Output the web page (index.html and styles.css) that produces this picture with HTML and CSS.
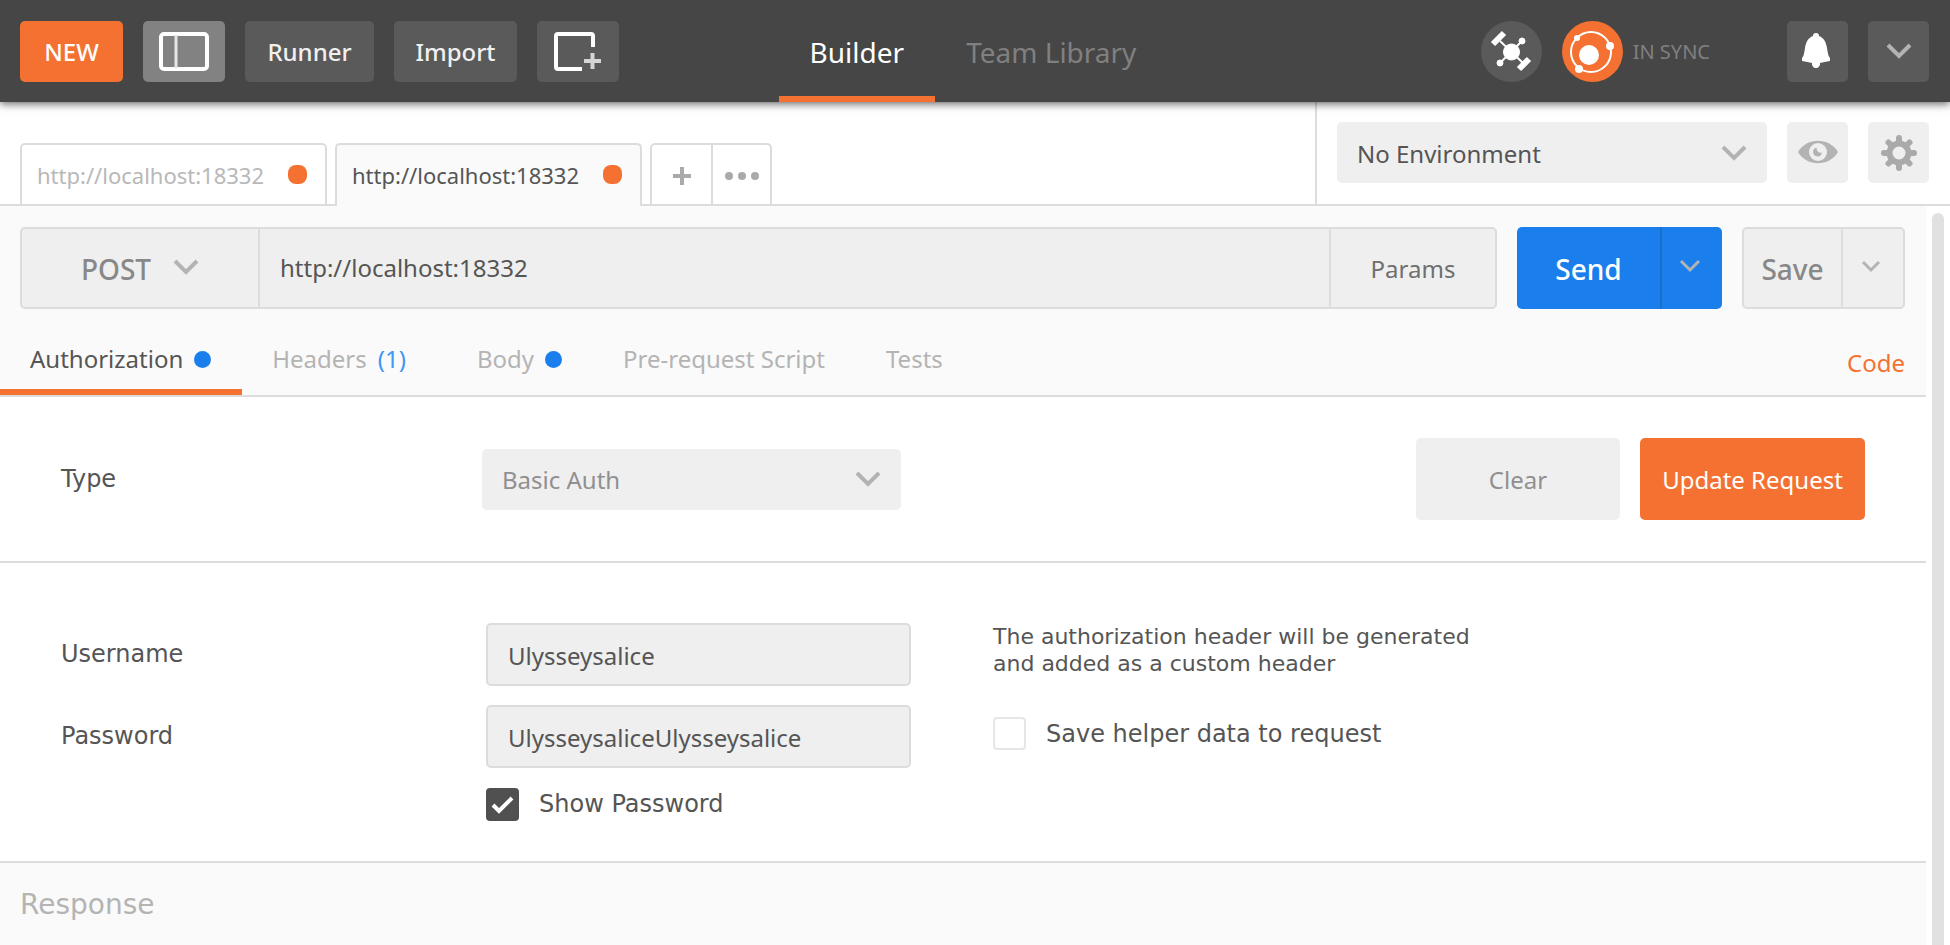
FILE: index.html
```
<!DOCTYPE html>
<html lang="en">
<head>
<meta charset="utf-8">
<title>Request Builder</title>
<link rel="stylesheet" href="styles.css">
</head>
<body>
<header class="topbar">
  <div class="topbar-left">
    <button class="btn-dark btn-new">NEW</button>
    <button class="btn-dark btn-icon is-on" aria-label="Toggle sidebar">
      <svg width="50" height="40" viewBox="0 0 50 40" fill="none" stroke="#fff"><rect x="2" y="3" width="46" height="35" rx="3" stroke-width="4"/><path d="M17 4v33" stroke-width="3" stroke="#e6e6e6"/></svg>
    </button>
    <button class="btn-dark btn-runner">Runner</button>
    <button class="btn-dark btn-import">Import</button>
    <button class="btn-dark btn-icon" aria-label="New window">
      <svg width="50" height="40" viewBox="0 0 50 40" fill="none" stroke="#fff" stroke-width="4"><path d="M40 16V5a2 2 0 0 0-2-2H5a2 2 0 0 0-2 2v31a2 2 0 0 0 2 2h24"/><path d="M31 30h17M39.500 22v16" stroke="#d5d5d5"/></svg>
    </button>
  </div>
  <nav class="topnav">
    <a href="#" class="topnav-item active">Builder</a>
    <a href="#" class="topnav-item">Team Library</a>
  </nav>
  <div class="topbar-right">
    <button class="round" aria-label="Interceptor">
      <svg width="61" height="61" viewBox="0 0 61 61"><g fill="#fff" stroke="#fff"><path d="M19 20L42 42M19 42L41 20" stroke-width="2"/><circle cx="30.500" cy="31" r="8"/><circle cx="41" cy="20" r="3"/><circle cx="19" cy="42" r="3"/><path d="M12 23L23 12M38 48L48 38" stroke-width="6"/></g></svg>
    </button>
    <button class="round round-sync" aria-label="Sync">
      <svg width="61" height="61" viewBox="0 0 61 61"><circle cx="29" cy="31" r="20" fill="none" stroke="#fff" stroke-width="2"/><g fill="#fff"><circle cx="27" cy="34" r="10"/><circle cx="15" cy="17" r="3"/><circle cx="48" cy="25" r="4"/><circle cx="17" cy="48" r="4"/></g></svg>
    </button>
    <span class="sync-text">IN SYNC</span>
    <button class="btn-dark btn-square" aria-label="Notifications">
      <svg width="34" height="36" viewBox="0 0 34 36" fill="#fff"><path d="M15 0c2 0 3 1 3 3 5 2 7 6 8 12 1 5 1 8 3 10v3c-4 1-7 1-10 2v2c-1 1-1 3-4 3s-3-2-4-3v-2c-3-1-6-1-10-2v-3c2-2 2-5 3-10 1-6 3-10 8-12 0-2 1-3 3-3z"/></svg>
    </button>
    <button class="btn-dark btn-square" aria-label="Account menu">
      <svg class="chev" width="26" height="16" viewBox="0 0 26 16"><path d="M2 2l11 11L24 2"/></svg>
    </button>
  </div>
</header>

<section class="tabstrip">
  <div class="tabs">
    <button class="tab"><span class="tab-name">http://localhost:18332</span><i class="dot dot-tab"></i></button>
    <button class="tab active"><span class="tab-name">http://localhost:18332</span><i class="dot dot-tab"></i></button>
    <div class="tab-tools">
      <button class="tab-tool" aria-label="New tab"><svg width="18" height="18" viewBox="0 0 18 18" stroke="#aaa" stroke-width="4"><path d="M0 9h18M9 0v18"/></svg></button>
      <button class="tab-tool" aria-label="More tabs"><svg width="36" height="10" viewBox="0 0 36 10" fill="#aaa"><circle cx="5" cy="5" r="4"/><circle cx="18" cy="5" r="4"/><circle cx="31" cy="5" r="4"/></svg></button>
    </div>
  </div>
  <div class="environment">
    <div class="select env-select">
      <select aria-label="Environment"><option>No Environment</option></select>
      <svg class="chev" width="26" height="16" viewBox="0 0 26 16"><path d="M2 2l11 11L24 2"/></svg>
    </div>
    <button class="btn-light btn-square" aria-label="Quick look">
      <svg width="40" height="26" viewBox="0 0 40 26"><path d="M0 12C9-3 31-3 40 12 31 27 9 27 0 12z" fill="#b3b3b3"/><circle cx="20" cy="12" r="9" fill="#efefef"/><path d="M18.500 7.500a4.500 4.500 0 1 0 5.500 5c-3 1-5.500-1-5.500-5z" fill="#b3b3b3"/></svg>
    </button>
    <button class="btn-light btn-square" aria-label="Settings">
      <svg width="36" height="36" viewBox="-18 -18 36 36"><g stroke="#aaa" fill="none"><circle r="9.500" stroke-width="6"/><path d="M0-15v4M0 15v-4M-15 0h4M15 0h-4M-10.500-10.500l3 3M10.500 10.500l-3-3M-10.500 10.500l3-3M10.500-10.500l-3 3" stroke-width="6" stroke-linecap="round"/></g></svg>
    </button>
  </div>
</section>

<div class="workspace">
  <main class="content">
    <section class="request">
      <div class="urlrow">
        <div class="urlbox">
          <button class="method">POST <svg class="chev" width="26" height="16" viewBox="0 0 26 16"><path d="M2 2l11 11L24 2"/></svg></button>
          <input class="url" type="text" aria-label="Request URL" value="http://localhost:18332">
          <button class="params">Params</button>
        </div>
        <div class="split split-send">
          <button class="split-main">Send</button>
          <button class="split-more" aria-label="Send options"><svg class="chev" width="22" height="14" viewBox="0 0 22 14"><path d="M2 2l9 9 9-9"/></svg></button>
        </div>
        <div class="split split-save">
          <button class="split-main">Save</button>
          <button class="split-more" aria-label="Save options"><svg class="chev" width="20" height="13" viewBox="0 0 20 13"><path d="M2 2l8 8 8-8"/></svg></button>
        </div>
      </div>
      <nav class="subtabs">
        <a href="#" class="subtab active">Authorization <i class="dot"></i></a>
        <a href="#" class="subtab">Headers <span class="count">(1)</span></a>
        <a href="#" class="subtab">Body <i class="dot"></i></a>
        <a href="#" class="subtab">Pre-request Script</a>
        <a href="#" class="subtab">Tests</a>
        <a href="#" class="code">Code</a>
      </nav>
    </section>

    <section class="auth-type">
      <label class="label" for="type">Type</label>
      <div class="select type-select">
        <select id="type"><option>Basic Auth</option></select>
        <svg class="chev" width="26" height="16" viewBox="0 0 26 16"><path d="M2 2l11 11L24 2"/></svg>
      </div>
      <div class="actions">
        <button class="btn-light btn-clear">Clear</button>
        <button class="btn-update">Update Request</button>
      </div>
    </section>

    <section class="credentials">
      <div class="fields">
        <label class="label" for="user">Username</label>
        <input class="field" id="user" type="text" value="Ulysseysalice">
        <label class="label" for="pass">Password</label>
        <input class="field" id="pass" type="text" value="UlysseysaliceUlysseysalice">
        <label class="check show-pass"><input type="checkbox" checked>Show Password</label>
      </div>
      <div class="helper">
        <p class="note">The authorization header will be generated<br>and added as a custom header</p>
        <label class="check"><input type="checkbox">Save helper data to request</label>
      </div>
    </section>

    <section class="response"><h2>Response</h2></section>
  </main>
  <div class="scroll"></div>
</div>
</body>
</html>
```
FILE: styles.css
```
* { box-sizing: border-box; }
html, body { height: 100%; }
body {
  margin: 0;
  display: flex;
  flex-direction: column;
  background: #fff;
  color: #555;
  font-family: "Noto Sans", "Open Sans", sans-serif;
  font-size: 24px;
  line-height: 32px;
}
button, input, select { font: inherit; color: inherit; margin: 0; }
button { border: 0; padding: 0; background: none; display: flex; align-items: center; justify-content: center; white-space: nowrap; }
a { color: inherit; text-decoration: none; }
svg { display: block; flex: none; overflow: visible; }
.chev { fill: none; stroke: #b3b3b3; stroke-width: 4; }

.topbar {
  position: relative;
  flex: none;
  display: grid;
  grid-template-columns: 1fr auto 1fr;
  height: 102px;
  padding: 0 21px 0 20px;
  background: #464646;
  box-shadow: 0 2px 8px rgba(0, 0, 0, .6);
}
.topbar-left, .topbar-right { display: flex; align-items: center; gap: 20px; }
.topbar-right { justify-content: flex-end; }
.btn-dark { height: 61px; padding-top: 2px; border-radius: 5px; background: #5a5a5a; color: #f0f0f0; font-weight: 500; }
.btn-new { width: 103px; background: #f47132; color: #fff; }
.btn-icon { width: 82px; padding: 0; }
.is-on { background: #828282; }
.btn-runner { width: 129px; }
.btn-import { width: 123px; }
.btn-square { width: 61px; height: 61px; padding: 0; border-radius: 5px; }
.topnav { display: flex; margin-right: 3px; }
.topnav-item { display: flex; align-items: center; padding: 8px 31px 0; border-bottom: 6px solid transparent; font-size: 28px; color: #808080; }
.topnav-item.active { color: #fff; border-color: #f47132; }
.round { width: 61px; height: 61px; border-radius: 50%; background: #5a5a5a; }
.round-sync { background: #f47132; }
.sync-text { margin: 2px 57px 0 -10px; font-size: 20px; color: #808080; }

.tabstrip { flex: none; display: flex; height: 104px; border-bottom: 2px solid #dcdcdc; }
.tabs { flex: 1; display: flex; align-items: flex-end; padding-left: 20px; }
.tab {
  width: 307px;
  height: 61px;
  margin-right: 8px;
  padding: 0 18px 0 15px;
  justify-content: space-between;
  border: 2px solid #dcdcdc;
  border-bottom: 0;
  border-radius: 5px 5px 0 0;
  color: #b8b8b8;
  font-size: 22px;
}
.tab.active { height: 63px; margin-bottom: -2px; padding-bottom: 2px; background: #fafafa; color: #555; }
.tab-name { width: 230px; overflow: hidden; text-align: left; }
.tab-tools { display: flex; border: 2px solid #dcdcdc; border-bottom: 0; border-radius: 5px 5px 0 0; height: 61px; }
.tab-tool { width: 59px; padding-top: 2px; }
.tab-tool + .tab-tool { border-left: 2px solid #dcdcdc; }
.dot { flex: none; width: 17px; height: 17px; border-radius: 50%; background: #1a7fec; }
.dot-tab { width: 19px; height: 19px; border-radius: 8px; background: #f47132; }
.environment { display: flex; gap: 20px; padding: 20px 21px 0 20px; border-left: 2px solid #dcdcdc; }
.select { display: grid; align-items: center; }
.select > * { grid-area: 1 / 1; }
.select .chev { justify-self: end; margin-right: 20px; pointer-events: none; }
.select select { appearance: none; width: 100%; height: 61px; padding: 2px 20px 0; border: 0; border-radius: 5px; background: #efefef; }
.env-select { width: 430px; height: 61px; }
.btn-light { background: #efefef; border-radius: 5px; }

.workspace { flex: 1; display: flex; min-height: 0; }
.content { flex: 1; display: flex; flex-direction: column; }
.scroll { width: 12px; margin: 7px 6px 0; border-radius: 6px 6px 0 0; background: #e1e1e1; }
.request { padding-top: 21px; background: #fafafa; border-bottom: 2px solid #dcdcdc; }
.urlrow { display: flex; gap: 20px; height: 82px; padding: 0 21px 0 20px; }
.urlbox { flex: 1; display: flex; border: 2px solid #dcdcdc; border-radius: 5px; background: #efefef; }
.method { width: 238px; gap: 22px; padding-top: 2px; border-right: 2px solid #dcdcdc; font-size: 28px; font-weight: 500; color: #888; }
.method .chev, .split-more .chev { margin-bottom: 4px; }
.url { flex: 1; min-width: 0; padding: 0 20px; border: 0; background: none; }
.params { width: 166px; padding-top: 2px; border-left: 2px solid #dcdcdc; color: #707070; }
.split { display: flex; border-radius: 5px; font-size: 28px; font-weight: 500; }
.split-main { flex: 1; padding-top: 2px; }
.split-more { width: 62px; padding-right: 4px; border-left: 2px solid #dcdcdc; }
.split-more .chev { stroke-width: 3; }
.split-send { width: 205px; background: #1a7fec; color: #fff; }
.split-send .split-more { border-color: #1a6fc8; }
.split-save { width: 163px; border: 2px solid #dcdcdc; background: #efefef; color: #888; }
.subtabs { display: flex; height: 86px; padding-right: 21px; color: #b4b4b4; }
.subtab { display: flex; align-items: center; gap: 11px; padding: 20px 31px 0 30px; border-bottom: 6px solid transparent; }
.subtab.active { color: #555; border-color: #f47132; }
.count { margin-right: 10px; color: #3d97f5; }
.code { margin-left: auto; padding-top: 38px; color: #f47132; }

.label, .check, .note, .response { font-family: "DejaVu Sans", sans-serif; }
.auth-type { display: flex; align-items: center; padding: 41px 61px; border-bottom: 2px solid #dcdcdc; }
.auth-type .label { width: 421px; }
.type-select { width: 419px; color: #909090; }
.actions { display: flex; gap: 20px; margin-left: auto; }
.btn-clear { width: 204px; height: 82px; padding-top: 2px; color: #909090; }
.btn-update { width: 225px; height: 82px; padding-top: 2px; border-radius: 5px; background: #f47132; color: #fff; }

.credentials { display: flex; padding: 60px 61px 40px; }
.fields { display: grid; grid-template-columns: 425px 425px; grid-template-rows: 63px 63px 34px; row-gap: 19px; width: 932px; }
.fields .label { align-self: center; padding-bottom: 2px; }
.field { width: 425px; height: 63px; padding: 2px 20px 0; border: 2px solid #dcdcdc; border-radius: 5px; background: #efefef; }
.check { display: flex; align-items: center; gap: 20px; }
.check input { appearance: none; width: 33px; height: 33px; border: 2px solid #e6e6e6; border-radius: 4px; background: #fff; }
.check input:checked { border-color: #505050; background: #505050 url("data:image/svg+xml,%3Csvg xmlns='http://www.w3.org/2000/svg' viewBox='0 0 29 29'%3E%3Cpath d='M5 15l6 6L24 8' fill='none' stroke='white' stroke-width='4'/%3E%3C/svg%3E"); }
.show-pass { grid-column: 2; }
.note { margin: 0 0 40px; font-size: 22px; line-height: 27px; }
.response { flex: 1; background: #fafafa; border-top: 2px solid #dcdcdc; padding: 24px 20px; color: #b4b4b4; }
.response h2 { margin: 0; font-size: 28px; font-weight: 400; line-height: 36px; }
```
